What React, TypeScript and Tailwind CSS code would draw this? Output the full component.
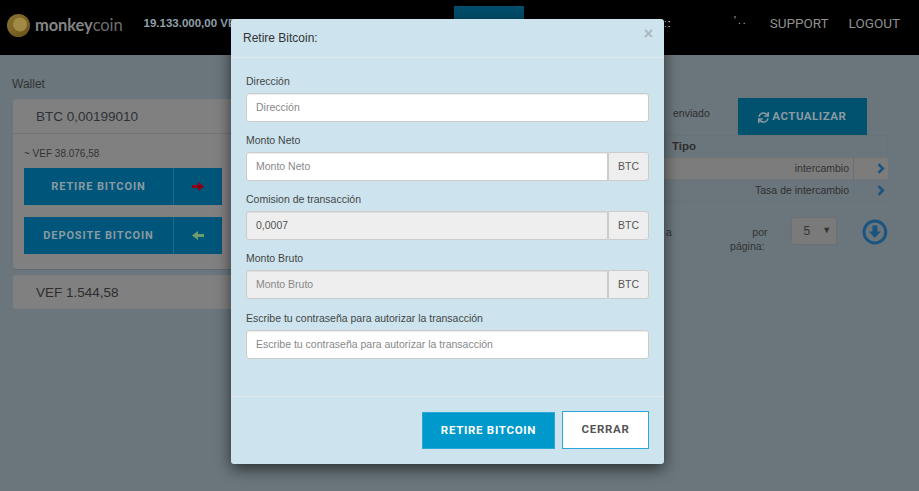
import React from "react";
import { FaSync } from "react-icons/fa";

function Field({ label, placeholder, value, disabled, addon, mt }: { label: string; placeholder?: string; value?: string; disabled?: boolean; addon?: boolean; mt: string }) {
  return (
    <div className={`flex flex-col ${mt}`}>
      <label className="text-[10.5px] leading-[16px] text-[#444] mb-[4px]">{label}</label>
      <div className="flex h-[29px]">
        <input
          readOnly
          placeholder={placeholder}
          value={value}
          className={`flex-1 min-w-0 h-full px-[9px] pb-[2px] text-[10.5px] text-[#555] placeholder:text-[#888] border border-[#ccc] outline-none shadow-[inset_0_1px_1px_rgba(0,0,0,0.075)] ${disabled ? "bg-[#eeeeee]" : "bg-white"} ${addon ? "rounded-l-[3px]" : "rounded-[3px]"}`}
        />
        {addon && (
          <span className="w-[41px] h-full flex items-center justify-center text-[10.5px] text-[#555] bg-[#eeeeee] border border-[#ccc] rounded-r-[3px]">BTC</span>
        )}
      </div>
    </div>
  );
}

function WalletBtn({ text, icon }: { text: string; icon: React.ReactNode }) {
  return (
    <div className="flex h-[37px] w-[198px] bg-[#00567a] text-[#8a9aa3] text-[11px] font-bold tracking-[0.9px] font-['Roboto',sans-serif]">
      <div className="w-[150px] pt-[2px] flex items-center justify-center border-r border-[#1b6a8a]">{text}</div>
      <div className="flex-1 flex items-center justify-center">{icon}</div>
    </div>
  );
}

function Chevron() {
  return (
    <svg width="8" height="11" viewBox="0 0 8 11">
      <path d="M1.5 1.2 5.8 5.5 1.5 9.8" fill="none" stroke="#1c5480" strokeWidth="2.6" />
    </svg>
  );
}

export default function App() {
  return (
    <div className="relative w-[919px] h-[491px] overflow-hidden bg-[#6a767c] font-['Liberation_Sans',Arial,sans-serif]">
      <header className="h-[55px] bg-black flex items-start relative">
        <div className="flex items-center pl-[7px] pt-[14px]">
          <svg width="23" height="23" viewBox="0 0 23 23">
            <defs>
              <linearGradient id="coin" x1="0" y1="0" x2="1" y2="1">
                <stop offset="0" stopColor="#8a7430" />
                <stop offset="1" stopColor="#6a5218" />
              </linearGradient>
            </defs>
            <circle cx="11.5" cy="11.5" r="11.5" fill="url(#coin)" />
            <circle cx="13" cy="10.5" r="7" fill="#a08a45" />
          </svg>
          <span className="ml-[5px] text-[16.5px] leading-none text-[#858585] font-['Lato',sans-serif] tracking-[-0.1px]">
            <span className="font-bold">monkey</span><span className="text-[#6f6f6f]">coin</span>
          </span>
        </div>
        <span className="ml-[21px] mt-[16px] text-[11.5px] leading-[14px] font-bold text-[#92a0a9] whitespace-nowrap">19.133.000,00 VEF</span>
        <div className="absolute left-[454px] top-[6px] w-[70px] h-[49px] bg-[#004d6b]" />
        <nav className="ml-auto flex gap-[20px] pt-[16px] pr-[19px] text-[13.5px] leading-[14px] text-[#8f8f8f] font-['Roboto',sans-serif]">
          <span>SUPPORT</span>
          <span>LOGOUT</span>
        </nav>
        <span className="absolute left-[664px] top-[17px] text-[10px] leading-[14px] text-white tracking-[1px]">{"\u02D0:"}</span>
        <span className="absolute left-[734px] top-[14px] text-[10px] leading-[14px] text-[#bbb] tracking-[2px]">{"'.."}</span>
      </header>

      <main className="flex justify-between h-[436px]">
        <section className="w-[231px] pl-[12px] pt-[21px]">
          <h2 className="text-[12px] leading-[16px] text-[#333] font-normal">Wallet</h2>
          <div className="ml-[1px] mt-[7px] w-[230px] h-[170px] bg-[#808080] rounded-[3px] shadow-[0_1px_1px_rgba(0,0,0,0.1)]">
            <div className="h-[35px] pl-[23px] pt-[2px] flex items-center text-[13.5px] text-[#2d3238] border-b border-[#737373]">BTC 0,00199010</div>
            <div className="pl-[11px] pt-[14px] text-[10px] leading-[12px] text-[#333]">~ VEF 38.076,58</div>
            <div className="pl-[11px] pt-[8px] flex flex-col gap-[12px]">
              <WalletBtn text="RETIRE BITCOIN" icon={<svg width="12" height="9" viewBox="0 0 12 9"><path d="M0 3h6V0l6 4.5L6 9V6H0z" fill="#8b0012" /></svg>} />
              <WalletBtn text="DEPOSITE BITCOIN" icon={<svg width="12" height="9" viewBox="0 0 12 9"><path d="M12 3H6V0L0 4.5 6 9V6h6z" fill="#6d9d6d" /></svg>} />
            </div>
          </div>
          <div className="ml-[1px] mt-[6px] w-[230px] h-[34px] bg-[#808080] rounded-[3px] pl-[23px] pt-[2px] flex items-center text-[13.5px] text-[#2d2d2d]">VEF 1.544,58</div>
        </section>

        <section className="w-[255px] pr-[31px] pt-[43px]">
          <div className="flex items-start">
            <span className="ml-[9px] mt-[8px] text-[10.5px] leading-[14px] text-[#2f2f2f]">enviado</span>
            <div className="ml-[28px] w-[129px] h-[37px] pt-[1px] bg-[#00526f] flex items-center justify-center gap-[3px] text-[#8a9aa3] text-[11.5px] font-bold tracking-[0.5px] font-['Roboto',sans-serif]">
              <FaSync className="text-[11px]" />
              <span>ACTUALIZAR</span>
            </div>
          </div>
          <div className="text-[10.5px] text-[#333] w-[224px]">
            <div className="flex h-[22px] border border-[#687378] border-b-0">
              <div className="flex-1 pl-[7px] pt-[2px] text-[11.5px] font-bold text-[#2f2f2f]">Tipo</div>
            </div>
            <div className="flex h-[23px] bg-[#7c7c7c] border-y border-[#6f7478]">
              <div className="flex-1 flex items-center justify-end pr-[4px] text-[#333]">intercambio</div>
              <div className="w-[35px] border-l border-[#6c7074] flex items-center justify-end pr-[3px]"><Chevron /></div>
            </div>
            <div className="flex h-[22px] border-b border-[#687378]">
              <div className="flex-1 flex items-center justify-end pr-[4px] text-[#2f2f2f]">Tasa de intercambio</div>
              <div className="w-[35px] border-l border-[#687378] flex items-center justify-end pr-[3px]"><Chevron /></div>
            </div>
          </div>
          <div className="mt-[15px] flex items-start">
            <span className="ml-[2px] w-[10px] text-[10.5px] leading-[14px] mt-[8px] text-[#333]">a</span>
            <div className="ml-[53px] w-[39px] mt-[8px] flex flex-col items-end text-[10.5px] leading-[14px] text-[#333]">
              <span>por</span>
              <span className="pr-[3px]">página:</span>
            </div>
            <div className="ml-[23px] w-[47px] h-[28px] bg-[#7a7a7a] border border-[#6c7074] rounded-[3px] flex items-center justify-between pl-[12px] pr-[5px] text-[12px] text-[#333]">
              <span>5</span>
              <span className="text-[9px]">▼</span>
            </div>
            <svg className="ml-[25px] mt-[2px]" width="26" height="26" viewBox="0 0 26 26">
              <circle cx="13" cy="13" r="11" fill="none" stroke="#1c5480" strokeWidth="3" />
              <path d="M10.5 6.5h5v6h3.5L13 19l-6-6.5h3.5z" fill="#1c5480" />
            </svg>
          </div>
        </section>
      </main>

      <div className="absolute left-[231px] top-[19px] w-[433px] h-[445px] bg-[#cde4ef] rounded-[3px] shadow-[0_5px_15px_rgba(0,0,0,0.6)] flex flex-col">
        <div className="h-[39px] flex items-start justify-between pl-[12px] pr-[11px] border-b border-[#e2e8ea] shrink-0">
          <h3 className="mt-[11px] text-[12px] leading-[16px] text-[#333] font-normal">Retire Bitcoin:</h3>
          <span className="mt-[6px] text-[16px] leading-[18px] font-bold text-[#a9b7bd]">×</span>
        </div>
        <div className="flex-1 px-[15px] pt-[15px] flex flex-col">
          <Field label="Dirección" placeholder="Dirección" mt="" />
          <Field label="Monto Neto" placeholder="Monto Neto" addon mt="mt-[10px]" />
          <Field label="Comision de transacción" value="0,0007" disabled addon mt="mt-[10px]" />
          <Field label="Monto Bruto" placeholder="Monto Bruto" disabled addon mt="mt-[10px]" />
          <Field label="Escribe tu contraseña para autorizar la transacción" placeholder="Escribe tu contraseña para autorizar la transacción" mt="mt-[11px]" />
        </div>
        <div className="h-[68px] shrink-0 border-t border-[#e2e8ea] flex items-start justify-end gap-[7px] pr-[15px] pt-[14px] font-['Roboto',sans-serif]">
          <button className="mt-[1px] w-[133px] h-[37px] bg-[#0099cc] border border-[#2aa8d8] text-white text-[11.5px] font-bold tracking-[0.7px]">RETIRE BITCOIN</button>
          <button className="w-[87px] h-[38px] bg-white border border-[#2aa8d8] text-[#555] text-[11.5px] font-bold tracking-[0.7px]">CERRAR</button>
        </div>
      </div>
    </div>
  );
}
